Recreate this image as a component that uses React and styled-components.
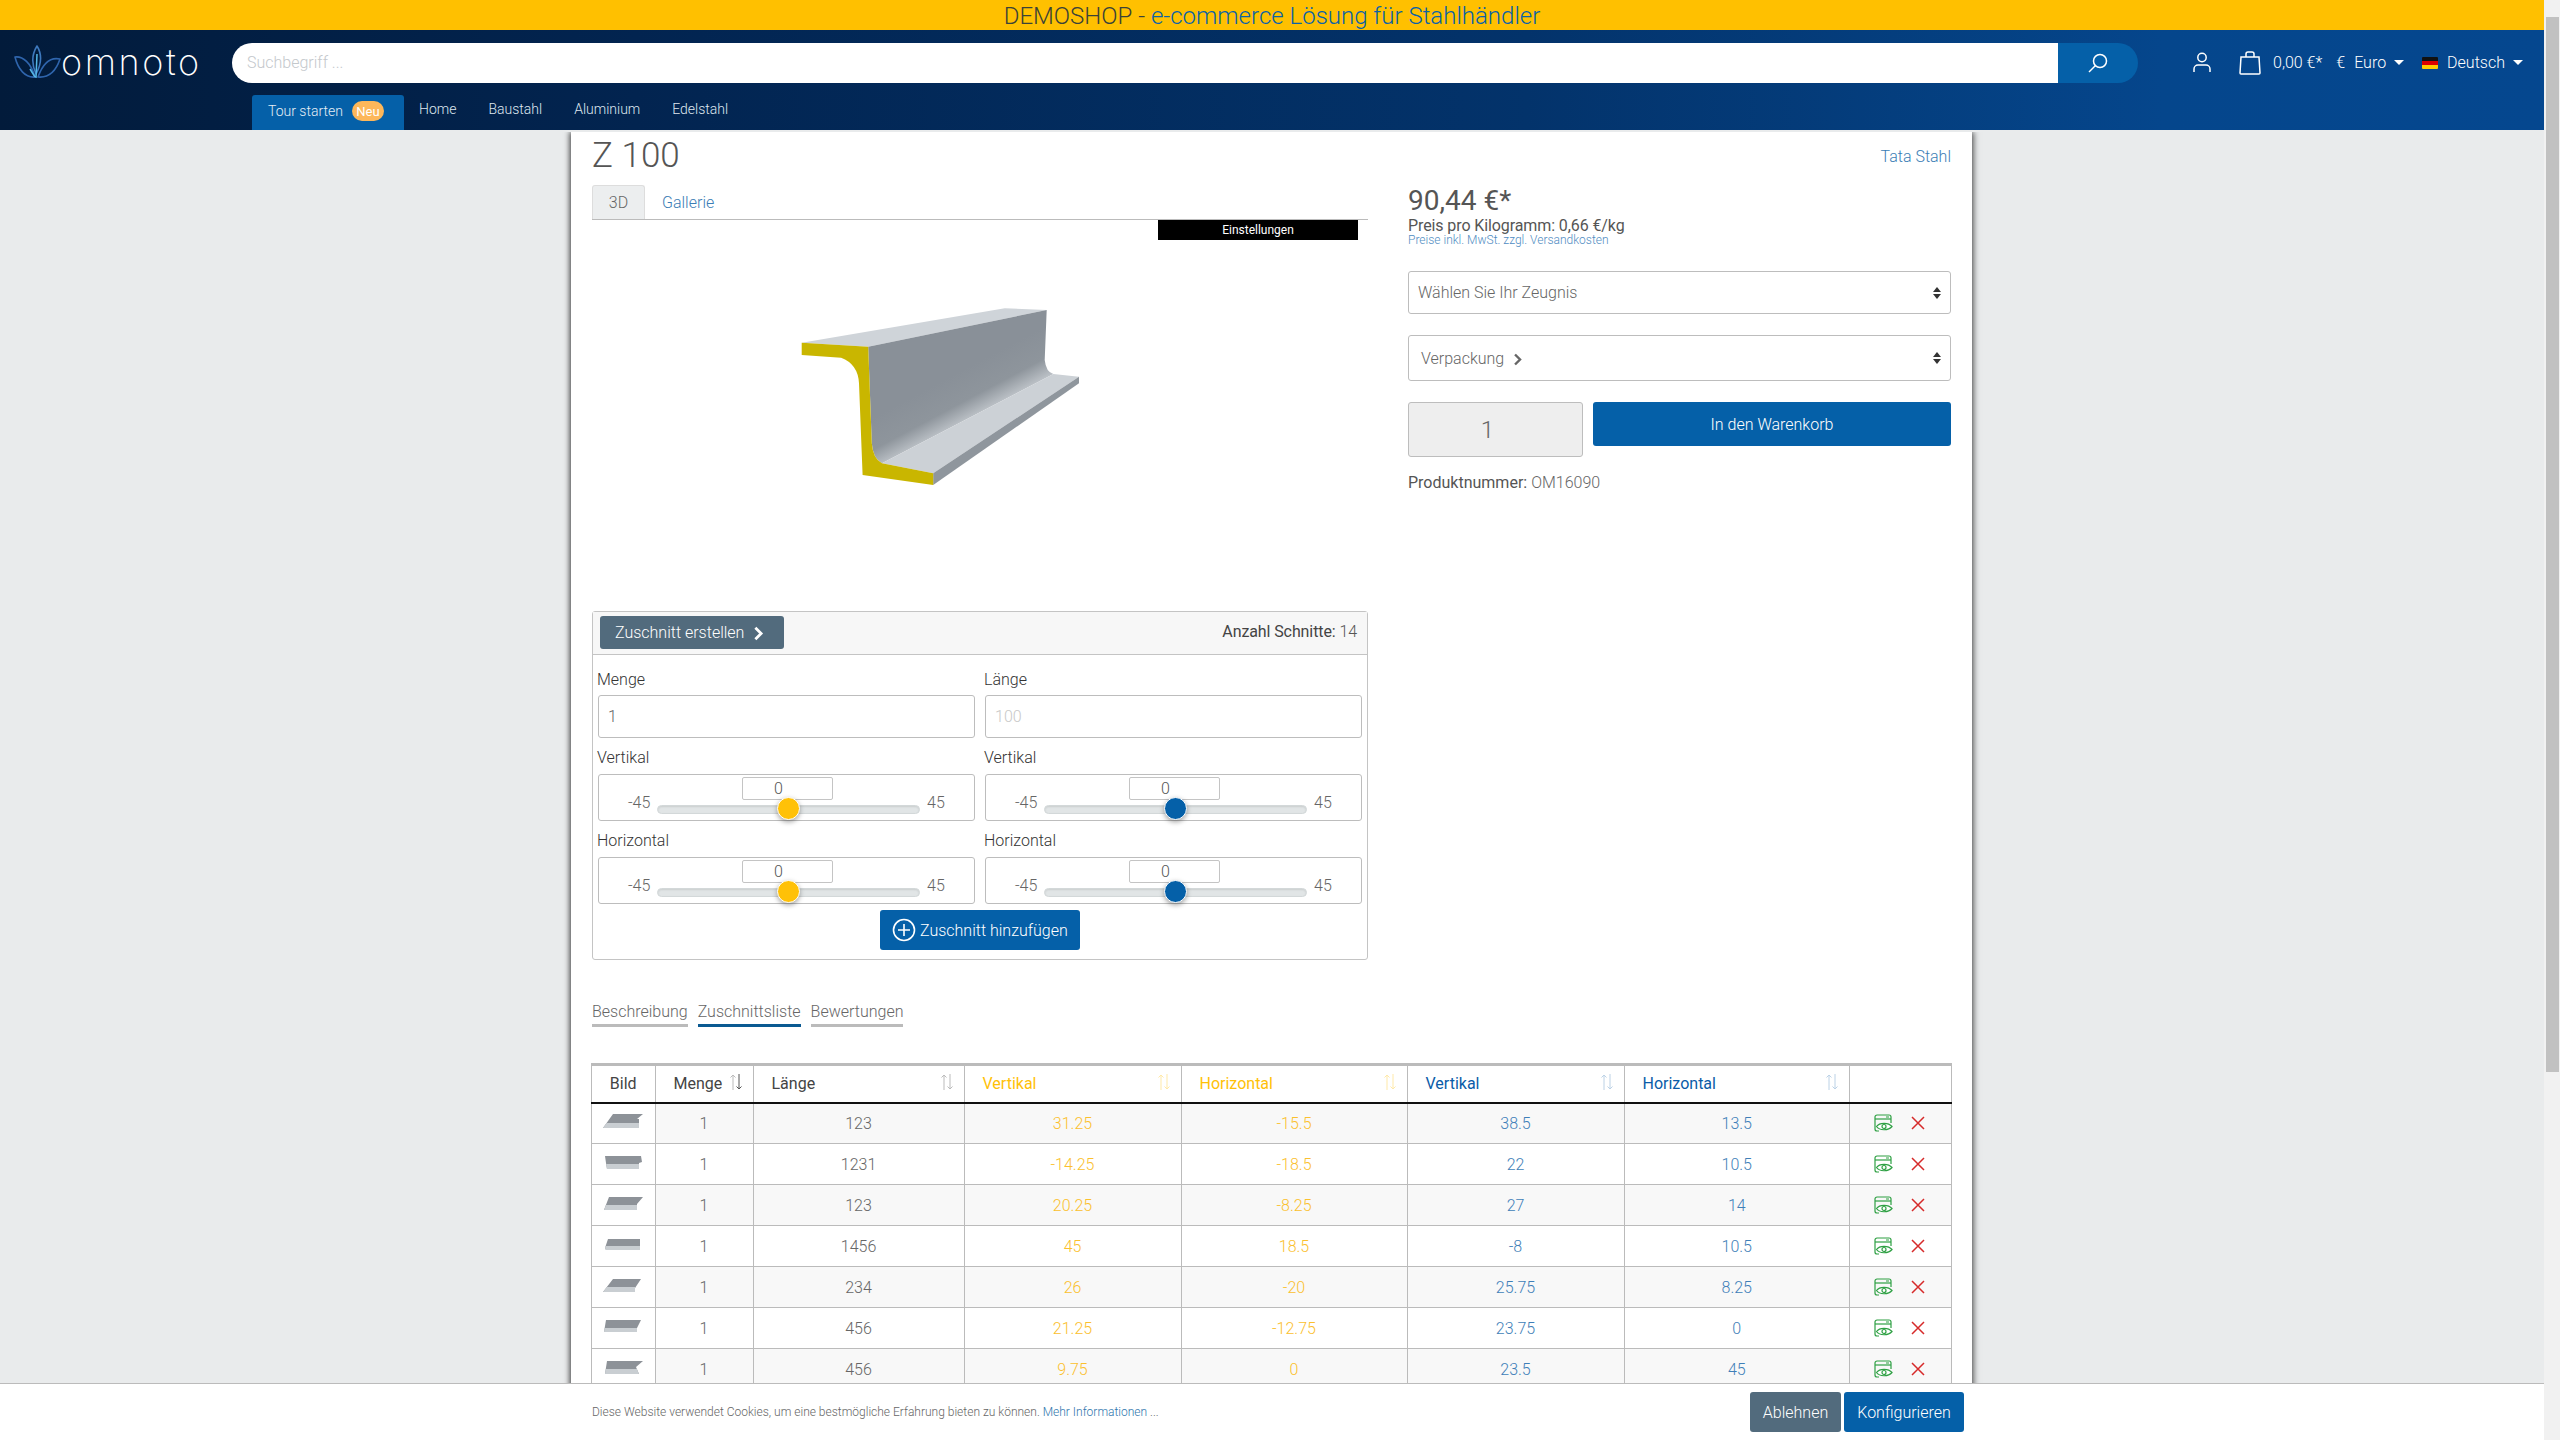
import React from "react";
import styled, { createGlobalStyle } from "styled-components";

const Global = createGlobalStyle`
  html, body { margin: 0; padding: 0; height: 100%; overflow: hidden; background: #e9ebec; }
  * { box-sizing: border-box; }
  body { font-family: Roboto, "Liberation Sans", sans-serif; font-weight: 300; color: #555; font-size: 16px; }
`;

const Root = styled.div`display: flex; height: 1440px; overflow: hidden; position: relative;`;
const Viewport = styled.div`width: 2544px; height: 1440px; overflow: hidden; position: relative; flex: none;`;
const ScrollTrack = styled.div`width: 16px; background: #f1f1f1; display: flex; flex-direction: column; align-items: stretch; padding: 17px 1px 0 2px;`;
const ScrollThumb = styled.div`height: 1055px; background: #c1c1c1;`;

const Banner = styled.div`height: 30px; background: #ffc000; display: flex; align-items: center; justify-content: center; font-size: 24px; font-weight: 300; color: #3a4238; line-height: 30px; width: 2544px; white-space: nowrap; padding-top: 2px;`;
const BannerLink = styled.span`color: #0a62a8;`;

const Header = styled.header`height: 100px; background: linear-gradient(90deg, #021b3b 0%, #022450 25%, #03336b 60%, #05468c 85%, #05478f 100%); color: #fff; display: flex; flex-direction: column;`;
const TopRow = styled.div`display: flex; align-items: center; height: 65px; padding: 0 0 0 14px;`;
const Logo = styled.div`display: flex; align-items: center; width: 218px; flex: none;`;
const LogoWord = styled.span`font-family: Inter, sans-serif; font-weight: 200; font-size: 36px; letter-spacing: 2.6px; color: #fff; margin: -1px 0 0 -1px; line-height: 1;`;
const Search = styled.div`display: flex; width: 1906px; height: 40px; flex: none;`;
const SearchInput = styled.div`flex: 1; background: #fff; border-radius: 20px 0 0 20px; padding-left: 15px; display: flex; align-items: center; color: #c4c8cc; font-size: 16px;`;
const SearchBtn = styled.div`width: 80px; background: #0560a8; border-radius: 0 20px 20px 0; display: flex; align-items: center; justify-content: center;`;
const Tools = styled.div`display: flex; align-items: center; padding-left: 55px; font-size: 16px; color: #fff;`;
const CaretDown = styled.span`display: inline-block; width: 0; height: 0; border-left: 5px solid transparent; border-right: 5px solid transparent; border-top: 5px solid #fff; margin-left: 8px;`;
const ToolText = styled.span`margin-left: ${p => p.$ml || 0}px; white-space: nowrap;`;
const Flag = styled.span`width: 16px; height: 12px; margin-left: 18px; background: linear-gradient(#111 0 33%, #d00 33% 66%, #fc0 66%); border-radius: 1px;`;

const NavRow = styled.nav`display: flex; align-items: flex-end; height: 35px; padding-left: 252px; font-size: 14px;`;
const TourBtn = styled.div`width: 152px; height: 35px; background: #0560a8; border-radius: 3px 3px 0 0; display: flex; align-items: center; padding: 0 0 3px 16px; color: #e6eef5; white-space: nowrap;`;
const NeuBadge = styled.span`background: #fdb75a; color: #fff; font-size: 13px; font-weight: 400; width: 32px; height: 20px; border-radius: 10px; margin-left: 9px; display: flex; align-items: center; justify-content: center;`;
const NavLink = styled.a`height: 35px; display: flex; align-items: center; margin-left: ${p => p.$ml}px; margin-bottom: 4px; color: #dfe7ef; white-space: nowrap;`;

const Panel = styled.main`width: 1401px; margin: 2px 0 0 571px; background: #fff; box-shadow: -2px 0 5px rgba(0,0,0,.5), 2px 0 6px rgba(0,0,0,.55); padding: 0 20px 0 21px; height: 1400px; clip-path: inset(0 -20px 0 -20px);`;
const TitleRow = styled.div`display: flex; justify-content: space-between; align-items: center; height: 53px; padding-bottom: 7px;`;
const Title = styled.h1`margin: 0; font-size: 35px; font-weight: 300; color: #555; line-height: 1;`;
const Brand = styled.a`color: #3b7db5; font-size: 16px; margin: 3px 1px 0 0;`;

const Columns = styled.div`display: flex; gap: 40px; align-items: flex-start;`;
const LeftCol = styled.div`width: 776px; flex: none;`;
const RightCol = styled.div`flex: 1; min-width: 0; padding-right: 1px;`;

const TabBar = styled.div`display: flex; height: 35px; border-bottom: 1px solid #bbb; align-items: stretch;`;
const MediaTab = styled.div`padding: 0 17px; display: flex; align-items: center; font-size: 16px; ${p => p.$active ? "background:#eceeef;border:1px solid #ddd;border-bottom:none;border-radius:3px 3px 0 0;color:#666;width:53px;justify-content:center;padding:0;" : "color:#3b7db5;"}`;
const Viewer = styled.div`height: 391px; position: relative;`;
const SettingsBar = styled.div`position: absolute; right: 10px; top: 0; width: 200px; height: 20px; background: #000; color: #fff; font-size: 12px; font-weight: 400; display: flex; align-items: center; justify-content: center;`;
const ProfileSvg = styled.svg`display: block; width: 776px; height: 391px;`;

const Card = styled.section`border: 1px solid #c4c4c4; border-radius: 3px; height: 349px;`;
const CardHead = styled.div`height: 43px; background: #f7f7f7; border-bottom: 1px solid #c4c4c4; padding: 4px 10px 0 7px; display: flex; justify-content: space-between; align-items: flex-start;`;
const CutBtn = styled.div`width: 184px; height: 33px; background: #526b7d; border-radius: 3px; color: #fff; font-size: 16px; display: flex; align-items: center; padding-left: 15px; gap: 9px;`;
const Count = styled.div`font-size: 16px; color: #444; font-weight: 400; line-height: 32px; letter-spacing: -.1px;`;
const CountVal = styled.span`font-weight: 300; color: #555;`;
const FormGrid = styled.div`display: grid; grid-template-columns: 377px 377px; column-gap: 10px; padding: 4px 0 0 5px;`;
const Field = styled.div``;
const FieldLabel = styled.div`font-size: 16px; font-weight: 300; color: #333; height: 36px; display: flex; align-items: center; padding-top: ${p => p.$pt}px; margin-left: -1px;`;
const TextBox = styled.div`height: 43px; border: 1px solid #bdbdbd; border-radius: 3px; padding-left: 9px; display: flex; align-items: center; color: ${p => p.$muted ? "#c8c8c8" : "#666"}; font-size: 16px;`;
const SliderBox = styled.div`height: 47px; border: 1px solid #bdbdbd; border-radius: 3px; position: relative; display: flex; align-items: flex-start; padding: 19px 0 0 29px; gap: 7px; font-size: 16px; color: #666;`;
const SliderEnd = styled.span`width: 22px; flex: none; line-height: 18px; white-space: nowrap;`;
const Track = styled.div`width: 263px; height: 9px; flex: none; background: #e1e5e6; border: 1px solid #d3d8d9; border-radius: 5px; position: relative; margin-top: 11px; box-shadow: inset 0 1px 2px rgba(0,0,0,.1);`;
const Thumb = styled.span`position: absolute; left: 119px; top: -9px; width: 23px; height: 23px; border-radius: 50%; background: ${p => p.$color}; border: 1.5px solid #fff; box-shadow: 0 2px 5px rgba(0,0,0,.35);`;
const ValueBox = styled.div`position: absolute; left: 143px; top: 2px; width: 91px; height: 23px; background: #fff; border: 1px solid #c4c4c4; border-radius: 2px; font-size: 16px; color: #555; text-align: left; padding-left: 31px; line-height: 21px;`;
const AddRow = styled.div`display: flex; justify-content: center; margin-top: 6px;`;
const AddBtn = styled.div`width: 200px; height: 40px; background: #0560a8; border-radius: 3px; color: #fff; font-size: 16px; display: flex; align-items: center; padding-left: 12px; gap: 4px; white-space: nowrap;`;

const Price = styled.div`font-size: 28px; font-weight: 400; color: #555; line-height: 1; margin-top: 2px; height: 30px;`;
const PerKilo = styled.div`font-size: 16px; font-weight: 400; color: #555; line-height: 17px; letter-spacing: -.1px;`;
const TaxNote = styled.div`font-size: 12px; color: #4f8cc2; line-height: 12px;`;
const SelectBox = styled.div`height: ${p => p.$h}px; margin-top: ${p => p.$mt}px; border: 1px solid #bdbdbd; border-radius: 3px; display: flex; align-items: center; justify-content: space-between; padding: 0 9px 0 ${p => p.$pl}px; color: #666; font-size: 16px;`;
const SelectLabel = styled.span`display: flex; align-items: center; gap: 9px;`;
const Updown = styled.span`display: flex; flex-direction: column; gap: 2px;`;
const TriUp = styled.span`width: 0; height: 0; border-left: 4px solid transparent; border-right: 4px solid transparent; border-bottom: 5px solid #333;`;
const TriDown = styled.span`width: 0; height: 0; border-left: 4px solid transparent; border-right: 4px solid transparent; border-top: 5px solid #333;`;
const BuyRow = styled.div`display: flex; gap: 10px; margin-top: 21px; align-items: flex-start;`;
const Qty = styled.div`width: 175px; height: 55px; background: #eee; border: 1px solid #bdbdbd; border-radius: 3px; font-size: 24px; color: #666; display: flex; align-items: center; justify-content: center; padding-right: 16px;`;
const BuyBtn = styled.div`flex: 1; height: 44px; background: #0560a8; border-radius: 3px; color: #fff; font-size: 16px; display: flex; align-items: center; justify-content: center;`;
const ProdNo = styled.div`margin-top: 16px; font-size: 16px; font-weight: 400; color: #555; line-height: 20px;`;
const ProdVal = styled.span`font-weight: 300; color: #666;`;

const ContentTabs = styled.div`display: flex; gap: 10px; margin-top: 40px; height: 27px;`;
const ContentTab = styled.div`font-size: 16px; color: #666; height: 27px; line-height: 23px; border-bottom: 3px solid ${p => p.$active ? "#0b5a92" : "#bbb"};`;

const DataTable = styled.table`border-collapse: collapse; table-layout: fixed; width: 1360px; margin: 36px 0 0 -1px; font-size: 16px; border-top: 3px solid #bbb;`;
const Th = styled.th`height: 38px; padding: 0 0 0 ${p => p.$center ? 0 : 18}px; border-left: 1px solid #bbb; border-right: 1px solid #bbb; border-bottom: 2px solid #111; font-weight: 400; text-align: ${p => p.$center ? "center" : "left"}; color: ${p => p.$color || "#444"}; position: relative;`;
const SortIcon = styled.svg`position: absolute; right: 10px; top: 6px; width: 14px; height: 20px;`;
const Tr = styled.tr`height: 41px; background: ${p => p.$odd ? "#f8f8f8" : "#fff"};`;
const Td = styled.td`padding: 0; border: 1px solid #bbb; text-align: center; color: ${p => p.$color || "#666"}; ${p => p.$plain ? "background:#fff;" : ""} vertical-align: middle;`;
const Thumbnail = styled.svg`display: block; margin: -5px auto 0; width: 44px; height: 22px;`;
const ActionCell = styled.div`display: flex; align-items: center; justify-content: flex-start; padding-left: 24px; gap: 18px;`;

const Cookie = styled.div`position: absolute; left: 0; right: 0; bottom: 0; height: 57px; background: #fff; border-top: 1px solid #bbb; padding: 8px 0 0 592px; display: flex; align-items: flex-start;`;
const CookieText = styled.div`width: 1158px; font-size: 12px; color: #666; line-height: 40px; white-space: nowrap;`;
const CookieLink = styled.a`color: #2f76ad;`;
const CookieBtn = styled.div`height: 40px; width: ${p => p.$w}px; margin-left: ${p => p.$ml || 0}px; background: ${p => p.$bg}; border-radius: 3px; color: #fff; font-size: 16px; display: flex; align-items: center; justify-content: center;`;

const Chevron = ({ color = "#fff", size = 13 }) => (
  <svg width={size * 0.7} height={size} viewBox="0 0 9 13" fill="none" style={{ marginTop: 2 }}><path d="M2 1.5 7 6.5 2 11.5" stroke={color} strokeWidth="2.4" /></svg>
);

const LogoMark = () => (
  <svg width="48" height="36" viewBox="0 0 48 36" fill="none" strokeLinejoin="round">
    <path d="M23 1C18 9 17 18 22 29 28 18 28 9 23 1Z" stroke="#3d78bd" strokeWidth="1.6" />
    <path d="M1 12C9 11 17 18 21 32 11 33 4 24 1 12Z" stroke="#2f65ad" strokeWidth="1.6" />
    <path d="M46 14C37 12 29 18 24 32 35 33 42 26 46 14Z" stroke="#2f65ad" strokeWidth="1.6" />
    <path d="M23 9 22 33M16 24 21 32" stroke="#55b6e6" strokeWidth="1.5" />
  </svg>
);

const UpDownSort = ({ up, down }) => (
  <SortIcon viewBox="0 0 14 20" fill="none" strokeWidth="1">
    <path d="M4 18V3M1.5 5.5 4 3l2.5 2.5" stroke={up} />
    <path d="M10 2v15M7.5 14.5 10 17l2.5-2.5" stroke={down} />
  </SortIcon>
);

const thumbs = [
  "2,18 12,4 42,4 36,9 38,9 38,18",
  "4,5 40,5 41,11 38,12 38,18 6,18 5,12",
  "3,18 8,5 42,5 36,12 36,18",
  "4,15 7,6 39,6 39,17 5,17",
  "2,18 12,5 40,5 34,14 34,18",
  "3,17 5,5 40,5 36,13 36,17",
  "4,18 6,5 42,5 35,11 38,18",
];

const PartThumb = ({ points }) => (
  <Thumbnail viewBox="0 0 44 22">
    <polygon points={points} fill="#8d9298" />
    <polygon points={points} fill="#c9ced2" clipPath="url(#thumbLower)" />
  </Thumbnail>
);

const EyeIcon = () => (
  <svg width="19" height="18" viewBox="0 0 19 18" fill="none" stroke="#2ea043" strokeWidth="1.2">
    <path d="M1 15V3a2 2 0 0 1 2-2h12a2 2 0 0 1 2 2v6" />
    <path d="M1 5h16" />
    <path d="M1 15c0 1.2 1 2 2 2h2" />
    <path d="M2.5 12.5C5.5 8.2 14.5 8.2 18 12.5 14.5 16.8 5.5 16.8 2.500 12.500Z" fill="#fff" />
    <circle cx="10" cy="12.500" r="2" />
    <path d="M12 3h3" strokeWidth="1" />
  </svg>
);
const CrossIcon = () => (
  <svg width="14" height="14" viewBox="0 0 14 14" fill="none" stroke="#d62a2a" strokeWidth="1.5"><path d="M1 1 13 13M13 1 1 13" /></svg>
);

const Slider = ({ color }) => (
  <SliderBox>
    <ValueBox>0</ValueBox>
    <SliderEnd>-45</SliderEnd>
    <Track><Thumb $color={color} /></Track>
    <SliderEnd>45</SliderEnd>
  </SliderBox>
);

const rows = [
  [1, 123, "31.25", "-15.5", "38.5", "13.5"],
  [1, 1231, "-14.25", "-18.5", "22", "10.5"],
  [1, 123, "20.25", "-8.25", "27", "14"],
  [1, 1456, "45", "18.5", "-8", "10.5"],
  [1, 234, "26", "-20", "25.75", "8.25"],
  [1, 456, "21.25", "-12.75", "23.75", "0"],
  [1, 456, "9.75", "0", "23.5", "45"],
];
const YEL = "#fbc02d", YELH = "#ffc107", BLU = "#3f7fb8", BLUH = "#0a5ca8";

export default function App() {
  return (
    <Root>
      <Global />
      <svg width="0" height="0" style={{ position: "absolute" }}>
        <defs>
          <clipPath id="thumbLower"><rect x="0" y="13" width="44" height="9" /></clipPath>
        </defs>
      </svg>
      <Viewport>
        <Banner>DEMOSHOP -&nbsp;<BannerLink>e-commerce Lösung für Stahlhändler</BannerLink></Banner>
        <Header>
          <TopRow>
            <Logo><LogoMark /><LogoWord>omnoto</LogoWord></Logo>
            <Search>
              <SearchInput>Suchbegriff ...</SearchInput>
              <SearchBtn>
                <svg width="20" height="20" viewBox="0 0 20 20" fill="none" stroke="#fff" strokeWidth="1.5"><circle cx="12" cy="8" r="6.5" /><path d="M7.5 12.5 1 19" /></svg>
              </SearchBtn>
            </Search>
            <Tools>
              <svg width="18" height="21" viewBox="0 0 18 21" fill="none" stroke="#fff" strokeWidth="1.5"><circle cx="9" cy="5.5" r="4.2" /><path d="M1 20v-3a4 4 0 0 1 4-4h8a4 4 0 0 1 4 4v3" /></svg>
              <svg width="24" height="24" viewBox="0 0 24 24" fill="none" stroke="#fff" strokeWidth="1.5" style={{ marginLeft: 27 }}><path d="M3 6h18l1 16a1 1 0 0 1-1 1H3a1 1 0 0 1-1-1L3 6Z" /><path d="M8 6V3a2 2 0 0 1 2-2h4a2 2 0 0 1 2 2v3" /></svg>
              <ToolText $ml={11}>0,00 €*</ToolText>
              <ToolText $ml={14}>€</ToolText>
              <ToolText $ml={9}>Euro</ToolText>
              <CaretDown />
              <Flag />
              <ToolText $ml={9}>Deutsch</ToolText>
              <CaretDown />
            </Tools>
          </TopRow>
          <NavRow>
            <TourBtn>Tour starten<NeuBadge>Neu</NeuBadge></TourBtn>
            <NavLink $ml={15}>Home</NavLink>
            <NavLink $ml={32}>Baustahl</NavLink>
            <NavLink $ml={32}>Aluminium</NavLink>
            <NavLink $ml={32}>Edelstahl</NavLink>
          </NavRow>
        </Header>
        <Panel>
          <TitleRow>
            <Title>Z 100</Title>
            <Brand>Tata Stahl</Brand>
          </TitleRow>
          <Columns>
            <LeftCol>
              <TabBar>
                <MediaTab $active>3D</MediaTab>
                <MediaTab>Gallerie</MediaTab>
              </TabBar>
              <Viewer>
                <SettingsBar>Einstellungen</SettingsBar>
                <ProfileSvg viewBox="592 220 776 391">
                  <defs>
                    <linearGradient id="web" gradientUnits="userSpaceOnUse" x1="946" y1="379" x2="970" y2="424">
                      <stop offset="0" stopColor="#899098" />
                      <stop offset="0.55" stopColor="#8e959c" />
                      <stop offset="1" stopColor="#c8cdd2" />
                    </linearGradient>
                  </defs>
                  <polygon points="801.7,342.7 1004.8,308.3 1046.7,310 868.2,346.7" fill="#cfd4d9" />
                  <path d="M868.2 346.7 1046.7 310 1044.7 360Q1046 372 1053.4 374L882 463.3Q873 459 871.8 443.3Z" fill="url(#web)" />
                  <polygon points="882,463.3 1053.4,374 1079,376.7 933.2,473.3" fill="#ccd1d6" />
                  <polygon points="933.2,473.3 1079,376.7 1079,383.3 933.2,485" fill="#8f969d" />
                  <path d="M801.7 342.7 868.2 346.7 871.8 443.3Q873 459 882 463.3L933.2 473.3 933.2 485 862.6 475 859 383.3Q858 364 841.1 357.7L801.7 355Z" fill="#c9b600" />
                </ProfileSvg>
              </Viewer>
              <Card>
                <CardHead>
                  <CutBtn>Zuschnitt erstellen <Chevron size={15} /></CutBtn>
                  <Count>Anzahl Schnitte: <CountVal>14</CountVal></Count>
                </CardHead>
                <FormGrid>
                  <Field><FieldLabel $pt={4}>Menge</FieldLabel><TextBox>1</TextBox></Field>
                  <Field><FieldLabel $pt={4}>Länge</FieldLabel><TextBox $muted>100</TextBox></Field>
                  <Field><FieldLabel $pt={2}>Vertikal</FieldLabel><Slider color="#ffc107" /></Field>
                  <Field><FieldLabel $pt={2}>Vertikal</FieldLabel><Slider color="#0560a8" /></Field>
                  <Field><FieldLabel $pt={2}>Horizontal</FieldLabel><Slider color="#ffc107" /></Field>
                  <Field><FieldLabel $pt={2}>Horizontal</FieldLabel><Slider color="#0560a8" /></Field>
                </FormGrid>
                <AddRow>
                  <AddBtn>
                    <svg width="24" height="24" viewBox="0 0 24 24" fill="none" stroke="#fff" strokeWidth="1.6"><circle cx="12" cy="12" r="10.5" /><path d="M12 6v12M6 12h12" /></svg>
                    Zuschnitt hinzufügen
                  </AddBtn>
                </AddRow>
              </Card>
            </LeftCol>
            <RightCol>
              <Price>90,44 €*</Price>
              <PerKilo>Preis pro Kilogramm: 0,66 €/kg</PerKilo>
              <TaxNote>Preise inkl. MwSt. zzgl. Versandkosten</TaxNote>
              <SelectBox $h={43} $mt={25} $pl={9}>Wählen Sie Ihr Zeugnis<Updown><TriUp /><TriDown /></Updown></SelectBox>
              <SelectBox $h={46} $mt={21} $pl={12}>
                <SelectLabel>Verpackung <Chevron color="#666" size={13} /></SelectLabel>
                <Updown><TriUp /><TriDown /></Updown>
              </SelectBox>
              <BuyRow>
                <Qty>1</Qty>
                <BuyBtn>In den Warenkorb</BuyBtn>
              </BuyRow>
              <ProdNo>Produktnummer: <ProdVal>OM16090</ProdVal></ProdNo>
            </RightCol>
          </Columns>
          <ContentTabs>
            <ContentTab>Beschreibung</ContentTab>
            <ContentTab $active>Zuschnittsliste</ContentTab>
            <ContentTab>Bewertungen</ContentTab>
          </ContentTabs>
          <DataTable>
            <colgroup>
              {[63.5, 98, 211, 217, 226, 217, 225.5, 102].map((w, i) => <col key={i} style={{ width: w }} />)}
            </colgroup>
            <thead>
              <tr>
                <Th $center>Bild</Th>
                <Th>Menge<UpDownSort up="#bbb" down="#555" /></Th>
                <Th>Länge<UpDownSort up="#bbb" down="#bbb" /></Th>
                <Th $color={YELH}>Vertikal<UpDownSort up="#ffe9a8" down="#ffe9a8" /></Th>
                <Th $color={YELH}>Horizontal<UpDownSort up="#ffe9a8" down="#ffe9a8" /></Th>
                <Th $color={BLUH}>Vertikal<UpDownSort up="#bcd2e6" down="#bcd2e6" /></Th>
                <Th $color={BLUH}>Horizontal<UpDownSort up="#bcd2e6" down="#bcd2e6" /></Th>
                <Th />
              </tr>
            </thead>
            <tbody>
              {rows.map((r, i) => (
                <Tr key={i} $odd={i % 2 === 0}>
                  <Td $plain><PartThumb points={thumbs[i]} /></Td>
                  <Td>{r[0]}</Td>
                  <Td>{r[1]}</Td>
                  <Td $color={YEL}>{r[2]}</Td>
                  <Td $color={YEL}>{r[3]}</Td>
                  <Td $color={BLU}>{r[4]}</Td>
                  <Td $color={BLU}>{r[5]}</Td>
                  <Td><ActionCell><EyeIcon /><CrossIcon /></ActionCell></Td>
                </Tr>
              ))}
            </tbody>
          </DataTable>
        </Panel>
        <Cookie>
          <CookieText>Diese Website verwendet Cookies, um eine bestmögliche Erfahrung bieten zu können. <CookieLink>Mehr Informationen</CookieLink> ...</CookieText>
          <CookieBtn $w={91} $bg="#526b7d">Ablehnen</CookieBtn>
          <CookieBtn $w={120} $ml={3} $bg="#0560a8">Konfigurieren</CookieBtn>
        </Cookie>
      </Viewport>
      <ScrollTrack><ScrollThumb /></ScrollTrack>
    </Root>
  );
}
